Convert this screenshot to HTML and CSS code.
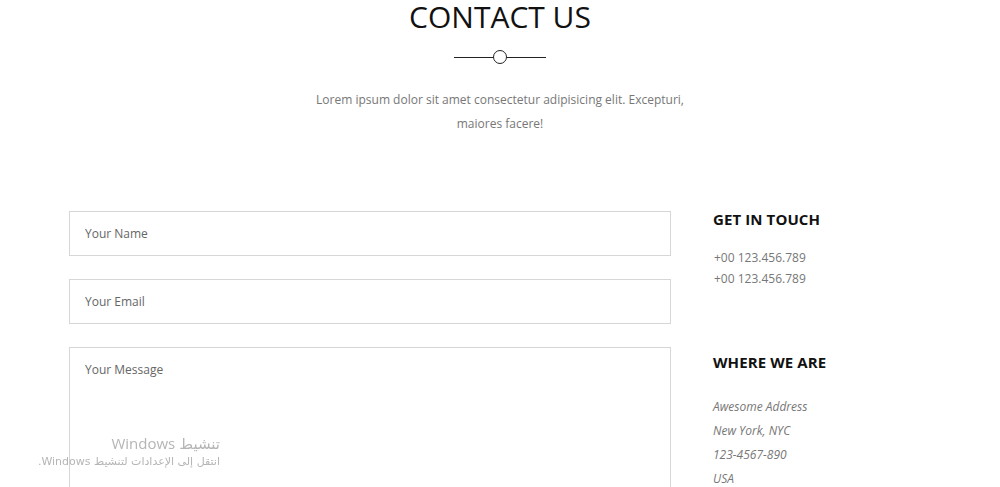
FILE: index.html
```html
<!DOCTYPE html>
<html lang="en">
<head>
<meta charset="utf-8">
<title>Contact Us</title>
<link rel="stylesheet" href="styles.css">
</head>
<body>
<section class="contact">
  <header class="contact-head">
    <h2 class="contact-title">CONTACT US</h2>
    <div class="divider"><span class="divider-line"></span><span class="divider-dot"></span><span class="divider-line"></span></div>
    <p class="contact-lead">Lorem ipsum dolor sit amet consectetur adipisicing elit. Excepturi,<br>maiores facere!</p>
  </header>
  <div class="contact-row">
    <form class="contact-form">
      <input class="field" type="text" placeholder="Your Name">
      <input class="field" type="email" placeholder="Your Email">
      <textarea class="field field-msg" placeholder="Your Message"></textarea>
    </form>
    <aside class="contact-info">
      <h3 class="info-title">GET IN TOUCH</h3>
      <div class="info-phones">
        <div>+00 123.456.789</div>
        <div>+00 123.456.789</div>
      </div>
      <h3 class="info-title info-title-2">WHERE WE ARE</h3>
      <address class="info-address">
        <div>Awesome Address</div>
        <div>New York, NYC</div>
        <div>123-4567-890</div>
        <div>USA</div>
      </address>
    </aside>
  </div>
</section>
<div class="win-mark" dir="rtl">
  <div class="win-1">تنشيط Windows</div>
  <div class="win-2">انتقل إلى الإعدادات لتنشيط Windows.</div>
</div>
</body>
</html>
```
FILE: styles.css
```css
* { box-sizing: border-box; }
html, body { margin: 0; padding: 0; background: #fff; }
body {
  font-family: "Open Sans", "Noto Sans", sans-serif;
  color: #333;
  width: 1000px;
  height: 487px;
  overflow: hidden;
}
.contact-head { text-align: center; }
.contact-title {
  margin: 0;
  font-size: 30px;
  line-height: 34px;
  font-weight: 400;
  color: #111;
}
.divider {
  margin: 16px auto 0;
  display: flex;
  align-items: center;
  justify-content: center;
  height: 14px;
}
.divider-line {
  width: 39px;
  height: 1px;
  background: #222;
}
.divider-dot {
  width: 14px;
  height: 14px;
  border: 1.5px solid #222;
  border-radius: 50%;
}
.contact-lead {
  margin: 24px 0 0;
  font-size: 12px;
  line-height: 24px;
  color: #777;
}
.contact-row {
  display: flex;
  margin-top: 75px;
  padding-left: 69px;
}
.contact-form {
  width: 602px;
  display: flex;
  flex-direction: column;
  gap: 23px;
}
.field {
  display: block;
  width: 100%;
  height: 45px;
  border: 1px solid #d6d6d6;
  border-radius: 0;
  padding: 0 15px;
  font-family: "Open Sans", sans-serif;
  font-size: 12px;
  color: #555;
  background: #fff;
  outline: none;
}
.field::placeholder { color: #666; }
.field-msg {
  height: 160px;
  padding-top: 13px;
  resize: none;
}
.contact-info {
  margin-left: 43px;
  margin-top: -2px;
}
.info-title {
  margin: 0 0 0 -1px;
  font-size: 15px;
  line-height: 20px;
  font-weight: 700;
  color: #111;
  letter-spacing: 0.1px;
}
.info-phones {
  margin-top: 18px;
  font-size: 12px;
  line-height: 21px;
  color: #777;
}
.info-title-2 { margin-top: 63px; }
.info-address {
  margin-top: 23px;
  margin-left: -1px;
  font-size: 12px;
  line-height: 24px;
  color: #777;
  font-style: italic;
}
.win-mark {
  position: fixed;
  left: 0;
  width: 220px;
  top: 433px;
  color: #b5b5b5;
  font-family: "DejaVu Sans", "Noto Sans", sans-serif;
  text-align: right;
  white-space: nowrap;
}
.win-1 { font-size: 15px; line-height: 21px; font-family: "Open Sans", "DejaVu Sans", sans-serif; }
.win-2 { font-size: 11px; line-height: 16px; }
```
